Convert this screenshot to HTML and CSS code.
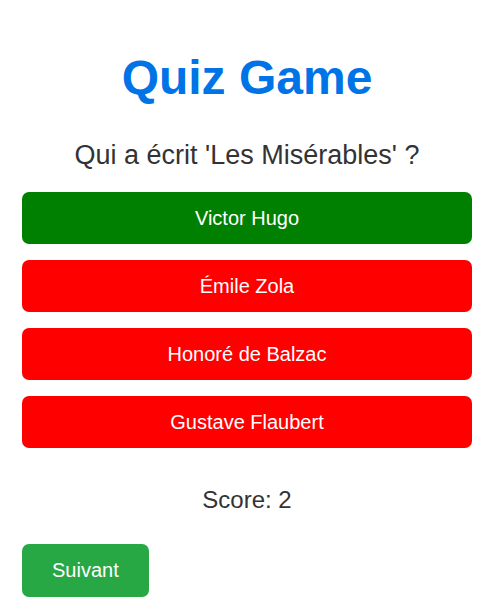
FILE: index.html
```html
<!DOCTYPE html>
<html lang="fr">
<head>
<meta charset="utf-8">
<title>Quiz Game</title>
<link rel="stylesheet" href="styles.css">
</head>
<body>
<div class="quiz">
  <h1 class="title">Quiz Game</h1>
  <p class="question">Qui a écrit 'Les Misérables' ?</p>
  <div class="answers">
    <button class="answer correct">Victor Hugo</button>
    <button class="answer wrong">Émile Zola</button>
    <button class="answer wrong">Honoré de Balzac</button>
    <button class="answer wrong">Gustave Flaubert</button>
  </div>
  <p class="score">Score: 2</p>
  <button class="next">Suivant</button>
</div>
</body>
</html>
```
FILE: styles.css
```css
body {
  margin: 0;
  background: #fff;
  font-family: "Liberation Sans", Arial, sans-serif;
  color: #333;
}
.quiz {
  padding: 0 18px 0 22px;
}
.title {
  margin: 50px 0 0;
  font-size: 48px;
  line-height: 56px;
  font-weight: bold;
  color: #0073e6;
  text-align: center;
}
.question {
  margin: 34px 0 0;
  font-size: 27px;
  line-height: 30px;
  text-align: center;
}
.answers {
  margin-top: 22px;
  display: flex;
  flex-direction: column;
  gap: 16px;
}
.answer {
  display: block;
  width: 100%;
  height: 52px;
  border: none;
  border-radius: 7px;
  color: #fff;
  font-family: inherit;
  font-size: 20px;
  padding: 0;
}
.correct { background: #008000; }
.wrong { background: #ff0000; }
.score {
  margin: 38px 0 0;
  font-size: 24px;
  line-height: 28px;
  text-align: center;
}
.next {
  margin-top: 30px;
  display: block;
  height: 53px;
  padding: 0 30px;
  border: none;
  border-radius: 7px;
  background: #28a745;
  color: #fff;
  font-family: inherit;
  font-size: 20px;
}
```
